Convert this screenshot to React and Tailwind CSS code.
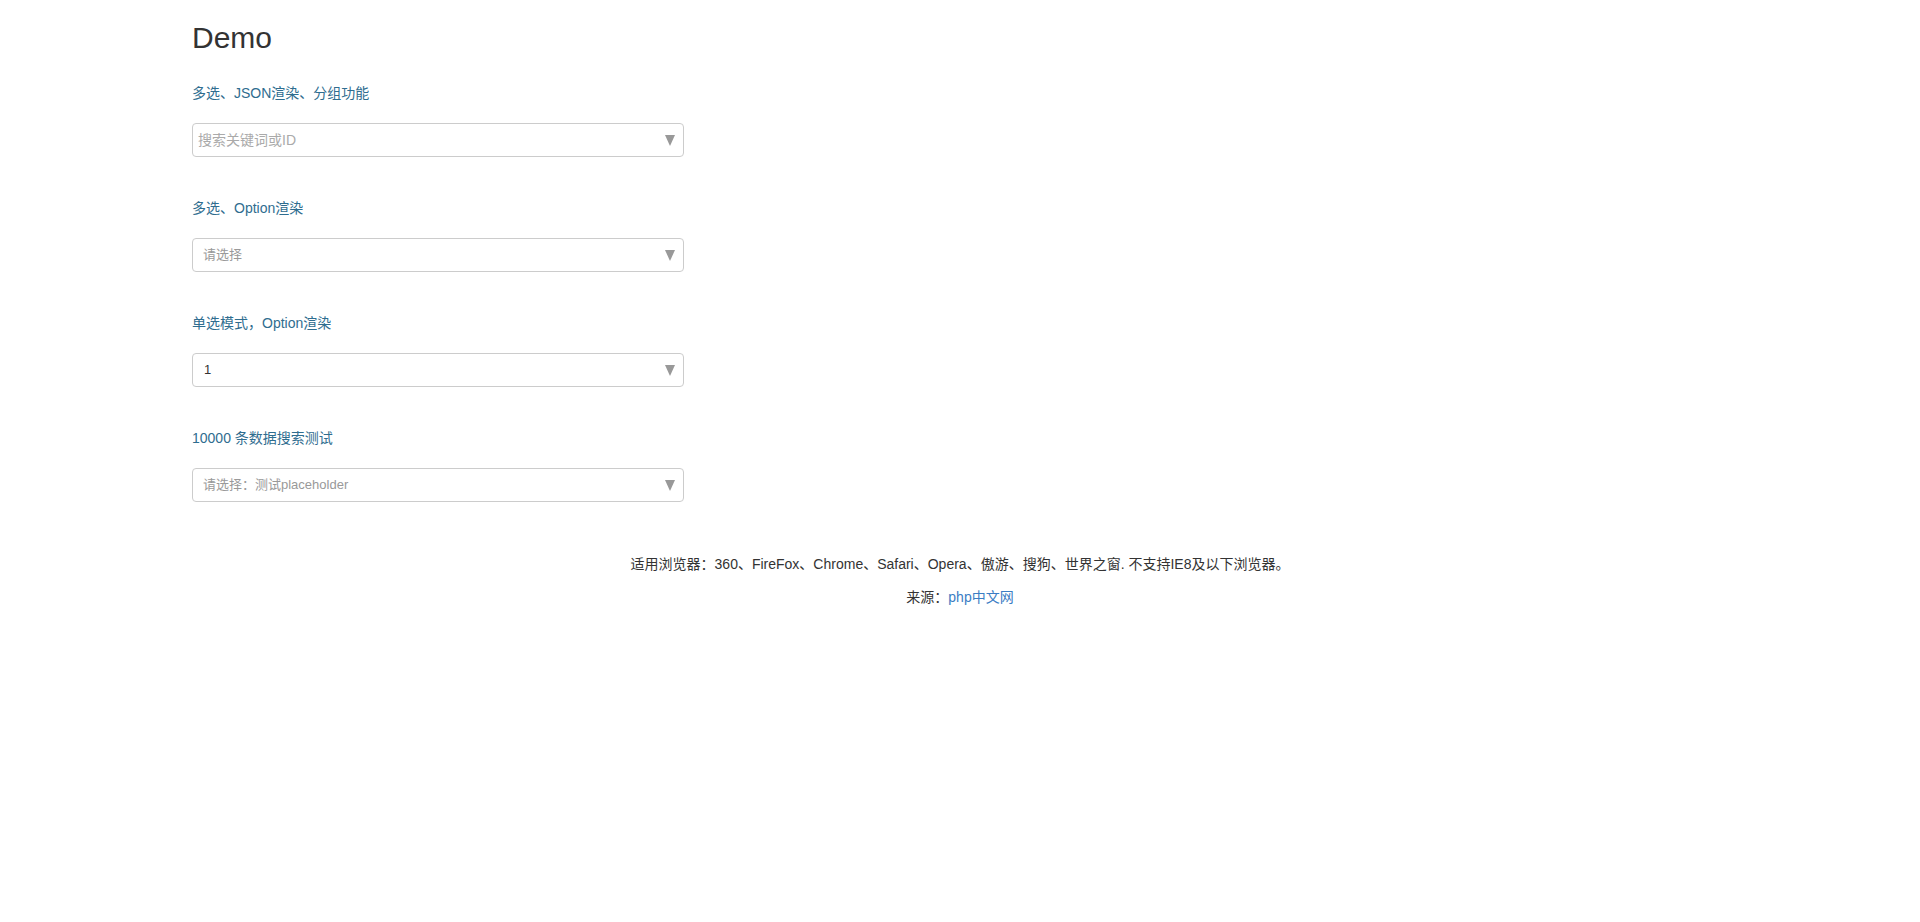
const FONT = "font-['Liberation_Sans','Noto_Sans_CJK_SC',sans-serif]"

const FIELDS = [
  { label: '多选、JSON渲染、分组功能', text: '搜索关键词或ID', tone: 'search' },
  { label: '多选、Option渲染', text: '请选择', tone: 'placeholder' },
  { label: '单选模式，Option渲染', text: '1', tone: 'value' },
  { label: '10000 条数据搜索测试', text: '请选择：测试placeholder', tone: 'placeholder' },
]

function Caret() {
  return (
    <svg width="10" height="11" viewBox="0 0 10 11" className="shrink-0">
      <path d="M0 0 H10 L5 11 Z" fill="#999" />
    </svg>
  )
}

function SelectBox({ text, tone }) {
  const textCls =
    tone === 'search'
      ? 'pl-[5px] text-[14px] text-[#aaa]'
      : tone === 'value'
        ? 'pl-[11px] text-[13px] text-[#333]'
        : 'pl-[10px] text-[13px] text-[#999]'
  return (
    <div className="flex h-[34px] w-[492px] items-center rounded-[4px] border border-[#ccc] bg-white pr-[8px]">
      <span className={`flex-1 truncate ${textCls}`}>{text}</span>
      <Caret />
    </div>
  )
}

export default function App() {
  return (
    <div className={`min-h-[922px] bg-white ${FONT}`}>
      <div className="pl-[192px] pt-[21px]">
        <h2 className="text-[30px] leading-[33px] text-[#333]">Demo</h2>
        <div className="mt-[29px] flex flex-col gap-[41px]">
          {FIELDS.map((f) => (
            <div key={f.label} className="flex flex-col gap-[20px]">
              <p className="text-[14px] leading-[20px] text-[#2f6d8f]">{f.label}</p>
              <SelectBox text={f.text} tone={f.tone} />
            </div>
          ))}
        </div>
      </div>

      {/* footer notes */}
      <div className="mt-[52px] flex flex-col gap-[13px] text-center text-[14px] leading-[20px] text-[#333]">
        <p>适用浏览器：360、FireFox、Chrome、Safari、Opera、傲游、搜狗、世界之窗. 不支持IE8及以下浏览器。</p>
        <p>
          来源：<a href="#" className="text-[#3b7dc4]">php中文网</a>
        </p>
      </div>
    </div>
  )
}
